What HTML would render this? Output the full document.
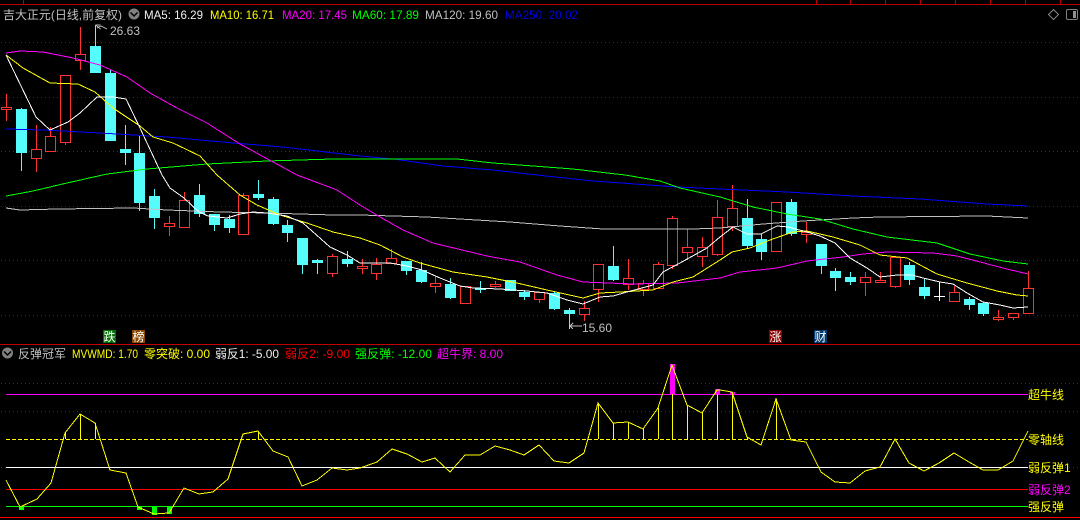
<!DOCTYPE html>
<html><head><meta charset="utf-8"><style>
html,body{margin:0;padding:0;background:#000;width:1080px;height:520px;overflow:hidden}
svg{display:block}
text{font-family:"Liberation Sans","WenQuanYi Zen Hei","Noto Sans CJK SC",sans-serif;font-size:12px}
.c{shape-rendering:crispEdges;fill:none}
</style></head><body>
<svg width="1080" height="520" viewBox="0 0 1080 520" xmlns="http://www.w3.org/2000/svg">
<defs><pattern id="d" x="1" y="0" width="4" height="1" patternUnits="userSpaceOnUse"><rect width="1" height="1" fill="#8c0c0c"/></pattern></defs>
<rect width="1080" height="520" fill="#000"/>
<!-- frame -->
<path class="c" stroke="#c00000" d="M0 4.500H1080M816.500 0V4M850.500 0V4M885.500 0V4M920.500 0V4M955.500 0V4M990.500 0V4M1025.500 0V4M1060.500 0V4M23.500 0V4M0 344.500H1080"/>
<!-- grid -->
<g style="shape-rendering:crispEdges" fill="url(#d)">
<rect y="42" width="1080" height="1"/><rect y="97" width="1080" height="1"/><rect y="151" width="1080" height="1"/><rect y="206" width="1080" height="1"/><rect y="260" width="1080" height="1"/><rect y="315" width="1080" height="1"/><rect y="383" width="1080" height="1"/><rect y="411" width="1080" height="1"/><rect y="467" width="1080" height="1"/>
</g>
<!-- cyan candles -->
<path class="c" stroke="#54fcfc" d="M21.5 108V171M95.5 25V73M110.5 70V141M125.5 125V165M139.5 135V211M154.5 189V229M199.5 184V217M214.5 214V231M229.5 215V233M258.5 180V200M273.5 197V225M287.5 220V242M302.5 238V274M317.5 259V274M347.5 251V267M406.5 261V275M421.5 262V283M450.5 278V299M480.5 281V293M510.5 280V291M524.5 290V300M554.5 292V310M569.5 308V329M613.5 246V281M747.5 199V249M761.5 234V260M791.5 199V236M821.5 244V274M835.5 268V291M850.5 272V285M909.5 262V285M924.5 278V299M969.5 297V310M983.5 302V316"/>
<path style="shape-rendering:crispEdges" fill="#54fcfc" d="M16 109h11V153h-11zM90 46h11V73h-11zM105 73h11V141h-11zM120 149h11V153h-11zM134 153h11V203h-11zM149 196h11V218h-11zM194 195h11V214h-11zM209 214h11V225h-11zM224 219h11V228h-11zM253 194h11V198h-11zM268 199h11V224h-11zM282 225h11V233h-11zM297 238h11V265h-11zM312 260h11V263h-11zM342 259h11V264h-11zM401 261h11V271h-11zM416 270h11V282h-11zM445 284h11V298h-11zM475 288h11V290h-11zM505 280h11V291h-11zM519 292h11V297h-11zM549 293h11V309h-11zM564 310h11V314h-11zM608 266h11V280h-11zM742 218h11V246h-11zM756 239h11V252h-11zM786 202h11V234h-11zM816 244h11V266h-11zM830 271h11V278h-11zM845 277h11V282h-11zM904 265h11V280h-11zM919 287h11V296h-11zM964 299h11V305h-11zM978 303h11V314h-11z"/>
<!-- red candles -->
<path style="shape-rendering:crispEdges" fill="#000" stroke="#ff3232" d="M6.5 94V107M6.5 109V121M1.5 107.500h10v2h-10zM36.500 125V149M36.500 158V172M31.500 149.500h10v9h-10zM50.500 127V136M45.500 136.500h10v15h-10zM65.500 142V145M60.500 75.500h10v67h-10zM80.500 27V54M80.500 60V70M75.500 54.500h10v6h-10zM169.500 216V223M169.500 226V236M164.500 223.500h10v3h-10zM184.500 192V200M179.500 200.500h10v27h-10zM243.500 193V195M238.500 195.500h10v39h-10zM332.500 254V256M332.500 273V277M327.500 256.500h10v17h-10zM362.500 259V266M362.500 268V274M357.500 266.500h10v2h-10zM376.500 258V264M376.500 273V280M371.500 264.500h10v9h-10zM391.500 249V258M386.500 258.500h10v5h-10zM435.500 276V283M435.500 286V293M430.500 283.500h10v3h-10zM465.500 303V304M460.500 286.500h10v17h-10zM495.500 281V284M495.500 286V288M490.500 284.500h10v2h-10zM539.500 299V303M534.500 292.500h10v7h-10zM584.500 301V308M584.500 314V321M579.500 308.500h10v6h-10zM598.500 289V302M593.500 264.500h10v25h-10zM628.500 259V278M628.500 284V290M623.500 278.500h10v6h-10zM643.500 280V283M643.500 289V296M638.500 283.500h10v6h-10zM658.500 262V264M653.500 264.500h10v24h-10zM672.500 216V218M672.500 265V269M667.500 218.500h10v47h-10zM687.500 229V247M687.500 252V260M682.500 247.500h10v5h-10zM702.500 237V247M702.500 256V267M697.500 247.500h10v9h-10zM717.500 200V217M717.500 254V256M712.500 217.500h10v37h-10zM732.500 185V208M732.500 226V231M727.500 208.500h10v18h-10zM776.500 251V252M771.500 202.500h10v49h-10zM806.500 222V232M806.500 234V243M801.500 232.500h10v2h-10zM865.500 272V277M865.500 282V296M860.500 277.500h10v5h-10zM880.500 272V280M875.500 280.500h10v2h-10zM895.500 286V288M890.500 257.500h10v29h-10zM954.500 286V292M949.500 292.500h10v9h-10zM998.500 310V317M998.500 319V321M993.500 317.500h10v2h-10zM1013.500 317V320M1008.500 313.500h10v4h-10zM1028.500 271V288M1023.500 288.500h10v25h-10z"/>
<path class="c" stroke="#fff" d="M939.500 282V301M934 296.500h11"/>
<!-- MA lines -->
<g class="c">
<polyline stroke="#c0c0c0" points="6,208 20,210 57,209 133,208 167,210 220,212 267,213 333,215 360,215 427,217 460,219 510,222 560,226 603,229 693,229 720,228 763,224 803,221 853,218 880,217 987,216 1028,218"/>
<polyline stroke="#0000ff" points="6,129 43,130 100,133 167,137 233,143 283,147 360,156 393,159 443,166 493,170 537,175 593,181 677,187 720,189 787,192 853,196 920,199 987,204 1028,206"/>
<polyline stroke="#00ff00" points="6,196 33,191 67,183 107,174 147,169 207,164 267,161 333,159 457,159 493,163 533,166 573,169 625,175 660,181 680,188 720,197 753,207 787,214 820,219 853,229 887,237 937,243 970,254 1003,261 1028,264"/>
<polyline stroke="#ff00ff" points="6,53 20,51 43,52 73,58 100,65 127,77 150,93 177,108 207,123 240,144 297,175 337,190 360,205 380,217 403,230 433,243 487,256 520,262 557,275 583,282 633,284 677,283 720,278 740,272 777,268 807,261 843,257 863,254 887,252 933,253 957,256 980,262 1007,269 1028,274"/>
<polyline stroke="#ffff00" points="6,55 23,68 50,83 78,84 95,92 113,108 140,126 153,137 173,143 200,156 217,175 240,195 257,205 280,215 307,223 333,232 360,238 380,245 403,257 420,263 453,272 487,277 517,283 547,290 583,298 600,293 620,292 653,290 673,282 693,277 720,260 732,252 750,248 770,240 793,232 807,231 833,237 860,245 880,255 907,258 937,274 967,283 997,291 1017,295 1028,296"/>
<polyline stroke="#ffffff" points="6,55 36,117 50,130 68,122 80,113 97,97 113,97 126,99 140,128 162,175 170,188 184,198 199,212 208,216 227,218 240,214 253,212 267,213 287,216 303,223 330,247 347,255 360,263 390,263 407,266 422,270 440,278 460,286 473,288 500,289 527,291 547,293 567,300 583,304 600,297 613,296 627,292 653,285 663,272 680,263 707,248 720,237 733,227 747,234 761,234 777,226 788,227 807,232 820,236 835,243 850,258 867,268 880,277 897,275 912,275 923,278 940,282 953,284 967,293 983,302 1000,305 1013,308 1028,307"/>
</g>
<!-- annotations -->
<path class="c" stroke="#c0c0c0" d="M95.500 25h5M95.500 25l5 4M97 28l4-2 6 3M570 326h12M570 326l3-3M570 326l3 3"/>
<text x="110" y="35" fill="#c0c0c0" textLength="30" lengthAdjust="spacingAndGlyphs">26.63</text>
<text x="582" y="332" fill="#c0c0c0" textLength="30" lengthAdjust="spacingAndGlyphs">15.60</text>
<!-- markers -->
<rect x="103" y="330" width="13" height="13" fill="#007000"/><text x="103.500" y="341" fill="#fff">跌</text>
<rect x="132" y="330" width="13" height="13" fill="#8a4500"/><text x="132.500" y="341" fill="#fff">榜</text>
<rect x="769" y="330" width="13" height="13" fill="#8b0000"/><text x="769.500" y="341" fill="#fff">涨</text>
<rect x="814" y="330" width="13" height="13" fill="#003a70"/><text x="814.500" y="341" fill="#fff">财</text>
<!-- header -->
<text x="3" y="19" fill="#c0c0c0" textLength="119" lengthAdjust="spacingAndGlyphs">吉大正元(日线,前复权)</text>
<circle cx="134" cy="14" r="5.500" fill="#808080"/><path d="M130.500 12.500l3.500 3.500 3.500-3.500" stroke="#000" stroke-width="1.500" fill="none"/>
<text x="144" y="19" fill="#f0f0f0" textLength="59" lengthAdjust="spacingAndGlyphs">MA5: 16.29</text>
<text x="210" y="19" fill="#ffff00" textLength="64" lengthAdjust="spacingAndGlyphs">MA10: 16.71</text>
<text x="282" y="19" fill="#ff00ff" textLength="65" lengthAdjust="spacingAndGlyphs">MA20: 17.45</text>
<text x="352" y="19" fill="#00ff00" textLength="67" lengthAdjust="spacingAndGlyphs">MA60: 17.89</text>
<text x="425" y="19" fill="#c0c0c0" textLength="73" lengthAdjust="spacingAndGlyphs">MA120: 19.60</text>
<text x="505" y="19" fill="#0000e0" textLength="73" lengthAdjust="spacingAndGlyphs">MA250: 20.02</text>
<path class="c" stroke="#808080" d="M1053.500 9.500l5 5-5 5-5-5z"/>
<rect x="1066.500" y="9.500" width="11" height="10" rx="1.500" fill="none" stroke="#808080"/><rect x="1073" y="11" width="3" height="7" fill="#909090"/>
<!-- lower header -->
<circle cx="7.500" cy="353" r="5.500" fill="#808080"/><path d="M4 351.500l3.500 3.500 3.500-3.500" stroke="#000" stroke-width="1.500" fill="none"/>
<text x="18" y="358" fill="#c0c0c0" textLength="48" lengthAdjust="spacingAndGlyphs">反弹冠军</text>
<text x="72" y="358" fill="#ffff00" textLength="66" lengthAdjust="spacingAndGlyphs">MVWMD: 1.70</text>
<text x="144" y="358" fill="#ffff00" textLength="66" lengthAdjust="spacingAndGlyphs">零突破: 0.00</text>
<text x="215" y="358" fill="#f0f0f0" textLength="64" lengthAdjust="spacingAndGlyphs">弱反1: -5.00</text>
<text x="285" y="358" fill="#ff0000" textLength="65" lengthAdjust="spacingAndGlyphs">弱反2: -9.00</text>
<text x="355" y="358" fill="#00ff00" textLength="77" lengthAdjust="spacingAndGlyphs">强反弹: -12.00</text>
<text x="437" y="358" fill="#ff00ff" textLength="66" lengthAdjust="spacingAndGlyphs">超牛界: 8.00</text>
<!-- lower lines -->
<g class="c">
<path stroke="#ff00ff" d="M6 394.500H1028"/>
<path stroke="#ffff00" stroke-dasharray="4 2" d="M6 439.500H1028"/>
<path stroke="#ffffff" d="M6 467.500H1028"/>
<path stroke="#ff0000" d="M6 489.500H1028M0 517.500H1080"/>
<path stroke="#00ff00" d="M6 506.500H1028"/>
<path stroke="#ffff00" d="M65.500 433V439M80.500 414V439M95.500 423V439M258.500 431V439M598.500 403V439M613.500 423V439M628.500 422V439M643.500 429V439M658.500 408V439M672.500 394V439M687.500 405V439M702.500 413V439M717.500 394V439M732.500 394V439M747.500 437V439M776.500 399V439"/>
</g>
<path style="shape-rendering:crispEdges" fill="#00ff00" d="M19 506h5v4h-5zM137 506h5v4h-5zM152 506h5v9h-5zM167 506h5v8h-5z"/>
<path style="shape-rendering:crispEdges" fill="#ff00ff" d="M670 364h5v30h-5zM715 389h5v5h-5zM730 392h5v2h-5z"/>
<polyline class="c" stroke="#ffff00" points="6,480 20,507 37,499 51,483 65,433 80,414 95,423 110,470 126,473 138,507 154,514 169,513 184,488 199,494 213,492 228,479 243,434 258,431 273,451 288,457 302,486 317,480 332,468 347,470 360,468 377,462 392,449 407,454 422,462 435,458 450,472 465,455 480,455 495,446 510,450 524,455 539,445 554,461 569,463 584,453 598,403 613,423 628,422 643,429 658,408 672,365 687,405 702,413 717,390 720,390 732,392 747,437 761,445 776,399 791,440 806,442 821,472 835,482 850,483 865,471 880,467 895,439 909,463 924,471 939,463 954,453 969,462 983,470 998,470 1013,461 1028,431"/>
<!-- labels -->
<text x="1028" y="399" fill="#ffff00">超牛线</text>
<text x="1028" y="444" fill="#ffff00">零轴线</text>
<text x="1028" y="472" fill="#ffff00">弱反弹1</text>
<text x="1028" y="494" fill="#ff00ff">弱反弹2</text>
<text x="1028" y="511" fill="#ffff00">强反弹</text>
</svg>
</body></html>
